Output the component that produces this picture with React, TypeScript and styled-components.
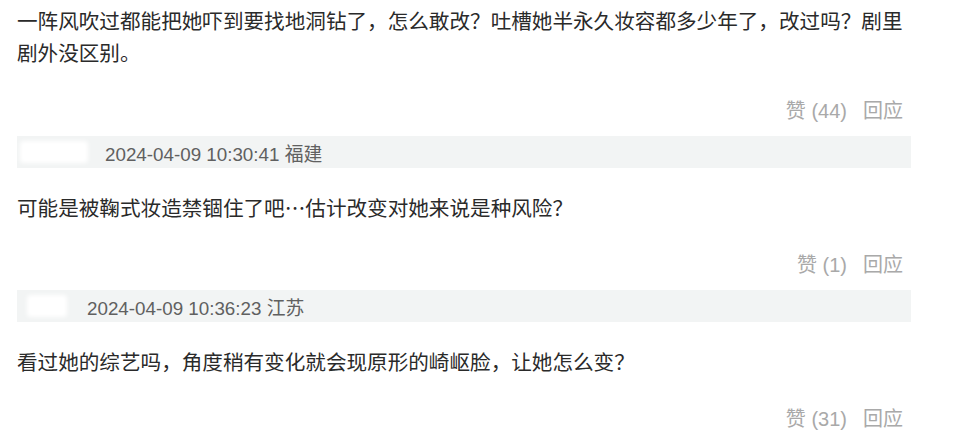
import React from "react";
import styled, { createGlobalStyle } from "styled-components";

interface CommentData {
  name?: { offset: number; width: number; gap: number };
  time?: string;
  place?: string;
  text: string;
  likes: number;
}

const comments: CommentData[] = [
  {
    text: "一阵风吹过都能把她吓到要找地洞钻了，怎么敢改？吐槽她半永久妆容都多少年了，改过吗？剧里剧外没区别。",
    likes: 44,
  },
  {
    name: { offset: 3, width: 68, gap: 17 },
    time: "2024-04-09 10:30:41",
    place: "福建",
    text: "可能是被鞠式妆造禁锢住了吧…估计改变对她来说是种风险？",
    likes: 1,
  },
  {
    name: { offset: 10, width: 40, gap: 20 },
    time: "2024-04-09 10:36:23",
    place: "江苏",
    text: "看过她的综艺吗，角度稍有变化就会现原形的崎岖脸，让她怎么变？",
    likes: 31,
  },
];

export default function App() {
  return (
    <>
      <GlobalStyle />
      <Page>
        {comments.map((c, i) => (
          <Comment key={i}>
            {c.time && c.name && (
              <Meta>
                <Name $offset={c.name.offset} $width={c.name.width} $gap={c.name.gap} />
                <Time>
                  {c.time} {c.place}
                </Time>
              </Meta>
            )}
            <Body $afterMeta={!!c.time}>{c.text}</Body>
            <Actions>
              <Action>赞 ({c.likes})</Action>
              <Action>回应</Action>
            </Actions>
          </Comment>
        ))}
      </Page>
    </>
  );
}

const GlobalStyle = createGlobalStyle`
  html, body {
    margin: 0;
    padding: 0;
    background: #ffffff;
  }
  body {
    font-family: "Liberation Sans", "Noto Sans CJK SC", sans-serif;
  }
`;

const Page = styled.div`
  width: 894px;
  padding: 4px 0 0 17px;
  display: flex;
  flex-direction: column;
`;

const Comment = styled.div`
  display: flex;
  flex-direction: column;
  margin-bottom: 13px;
`;

const Meta = styled.div`
  height: 32px;
  display: flex;
  align-items: center;
  background: #f2f4f4;
`;

const Name = styled.div<{ $offset: number; $width: number; $gap: number }>`
  margin-left: ${(p) => p.$offset}px;
  margin-right: ${(p) => p.$gap}px;
  width: ${(p) => p.$width}px;
  height: 22px;
  background: #ffffff;
  border-radius: 4px;
  filter: blur(2px);
`;

const Time = styled.span`
  font-size: 18.8px;
  color: #606060;
  white-space: nowrap;
`;

const Body = styled.div<{ $afterMeta: boolean }>`
  margin-top: ${(p) => (p.$afterMeta ? 23 : 0)}px;
  font-family: "Noto Sans CJK SC", "Liberation Sans", sans-serif;
  font-size: 20.6px;
  line-height: 32px;
  color: #2a2a2a;
`;

const Actions = styled.div<{ $first?: boolean }>`
  margin-top: 26px;
  height: 28px;
  display: flex;
  justify-content: flex-end;
  align-items: center;
  gap: 16px;
  padding-right: 8px;
  ${Comment}:first-child & {
    margin-top: 27px;
  }
`;

const Action = styled.span`
  font-size: 20px;
  color: #a9a9a9;
  white-space: nowrap;
`;
